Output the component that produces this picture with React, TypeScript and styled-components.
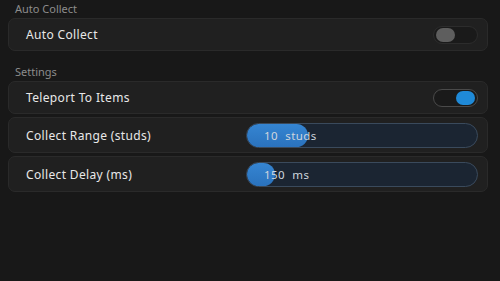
import React from 'react';
import styled, { createGlobalStyle } from 'styled-components';

const GlobalStyle = createGlobalStyle`
  html, body {
    margin: 0;
    padding: 0;
    background: #181818;
  }
  body {
    font-family: 'Noto Sans', 'Open Sans', sans-serif;
    -webkit-font-smoothing: antialiased;
  }
`;

const Page = styled.div`
  width: 500px;
  height: 281px;
  box-sizing: border-box;
  padding: 2px 12px 0 8px;
  display: flex;
  flex-direction: column;
  gap: 14px;
  background: #181818;
`;

const Section = styled.section`
  display: flex;
  flex-direction: column;
  gap: 3px;
`;

const SectionLabel = styled.div`
  padding: 0 7px;
  margin-bottom: -1px;
  font-size: 11px;
  line-height: 14px;
  color: #8c8c8c;
`;

const Card = styled.div<{ $tall?: boolean }>`
  height: ${p => (p.$tall ? 36 : 33)}px;
  box-sizing: border-box;
  display: flex;
  align-items: center;
  justify-content: space-between;
  padding: 0 9px 0 17px;
  background: #202020;
  border: 1px solid #2a2a2a;
  border-radius: 7px;
`;

const CardLabel = styled.span`
  font-size: 12px;
  color: #e8e8e8;
  letter-spacing: 0.35px;
`;

const Track = styled.div<{ $on: boolean }>`
  width: 45px;
  height: 18px;
  box-sizing: border-box;
  border-radius: 9px;
  padding: 1px 2px;
  display: flex;
  align-items: center;
  justify-content: ${p => (p.$on ? 'flex-end' : 'flex-start')};
  background: #1a1a1a;
  border: 1px solid ${p => (p.$on ? '#4a4a4a' : '#2c2c2c')};
`;

const Knob = styled.div<{ $on: boolean }>`
  width: 19px;
  height: 14px;
  border-radius: 7px;
  background: ${p => (p.$on ? '#1f8ad8' : '#5e5e5e')};
`;

const SliderBar = styled.div`
  position: relative;
  width: 232px;
  height: 25px;
  box-sizing: border-box;
  border-radius: 13px;
  background: #1b2532;
  border: 1px solid #3a4a5c;
  overflow: hidden;
  display: flex;
  align-items: center;
`;

const SliderFill = styled.div`
  position: absolute;
  left: 0;
  top: 0;
  bottom: 0;
  border-radius: 13px;
  background: linear-gradient(180deg, #3585d2 0%, #2a72bd 100%);
`;

const SliderValue = styled.span`
  position: relative;
  padding-left: 17px;
  font-size: 11.5px;
  color: #cfd6de;
  word-spacing: 4px;
  letter-spacing: 0.4px;
`;

function Toggle ({ on }: { on: boolean }) {
  return (
    <Track $on={on}>
      <Knob $on={on} />
    </Track>
  );
}

function Slider ({ fill, text }: { fill: number; text: string }) {
  return (
    <SliderBar>
      <SliderFill style={{ width: fill }} />
      <SliderValue>{text}</SliderValue>
    </SliderBar>
  );
}

export default function App () {
  return (
    <>
      <GlobalStyle />
      <Page>
        <Section>
          <SectionLabel>Auto Collect</SectionLabel>
          <Card>
            <CardLabel>Auto Collect</CardLabel>
            <Toggle on={false} />
          </Card>
        </Section>
        <Section>
          <SectionLabel>Settings</SectionLabel>
          <Card>
            <CardLabel>Teleport To Items</CardLabel>
            <Toggle on />
          </Card>
          <Card $tall>
            <CardLabel>Collect Range (studs)</CardLabel>
            <Slider fill={61} text='10 studs' />
          </Card>
          <Card $tall>
            <CardLabel>Collect Delay (ms)</CardLabel>
            <Slider fill={28} text='150 ms' />
          </Card>
        </Section>
      </Page>
    </>
  );
}
